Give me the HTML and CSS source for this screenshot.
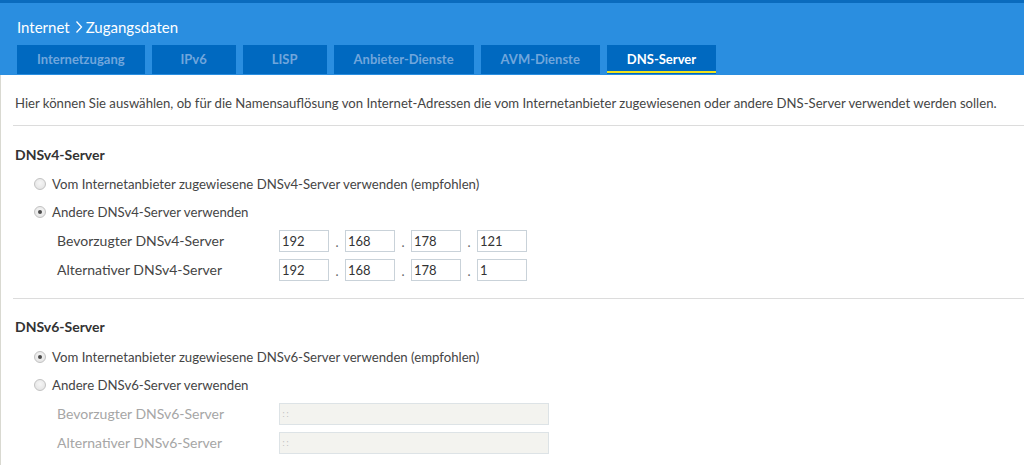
FILE: index.html
```html
<!DOCTYPE html>
<html lang="de">
<head>
<meta charset="utf-8">
<title>Zugangsdaten</title>
<link rel="stylesheet" href="styles.css">
</head>
<body>
<div class="topbar"></div>
<header class="header">
  <h1 class="title">Internet<svg class="chev" width="8" height="14" viewBox="0 0 8 14"><polyline points="1.5,1.5 6.5,7 1.5,12.5" fill="none" stroke="#fff" stroke-width="1.3"/></svg>Zugangsdaten</h1>
  <nav class="tabs">
    <a class="tab">Internetzugang</a>
    <a class="tab">IPv6</a>
    <a class="tab">LISP</a>
    <a class="tab">Anbieter-Dienste</a>
    <a class="tab">AVM-Dienste</a>
    <a class="tab active">DNS-Server</a>
  </nav>
</header>
<main class="content">
  <p class="intro">Hier können Sie auswählen, ob für die Namensauflösung von Internet-Adressen die vom Internetanbieter zugewiesenen oder andere DNS-Server verwendet werden sollen.</p>
  <hr class="sep">
  <section class="block">
    <h2 class="sec-title">DNSv4-Server</h2>
    <div class="radios">
      <label class="radio-row"><span class="radio"></span>Vom Internetanbieter zugewiesene DNSv4-Server verwenden (empfohlen)</label>
      <label class="radio-row"><span class="radio checked"></span>Andere DNSv4-Server verwenden</label>
    </div>
    <div class="field-row">
      <span class="field-label">Bevorzugter DNSv4-Server</span>
      <div class="ip">
        <input class="octet" value="192"><span class="dot">.</span>
        <input class="octet" value="168"><span class="dot">.</span>
        <input class="octet" value="178"><span class="dot">.</span>
        <input class="octet" value="121">
      </div>
    </div>
    <div class="field-row">
      <span class="field-label">Alternativer DNSv4-Server</span>
      <div class="ip">
        <input class="octet" value="192"><span class="dot">.</span>
        <input class="octet" value="168"><span class="dot">.</span>
        <input class="octet" value="178"><span class="dot">.</span>
        <input class="octet" value="1">
      </div>
    </div>
  </section>
  <hr class="sep sep-lower">
  <section class="block">
    <h2 class="sec-title sec-title-lower">DNSv6-Server</h2>
    <div class="radios radios-lower">
      <label class="radio-row"><span class="radio checked"></span>Vom Internetanbieter zugewiesene DNSv6-Server verwenden (empfohlen)</label>
      <label class="radio-row"><span class="radio"></span>Andere DNSv6-Server verwenden</label>
    </div>
    <div class="field-row disabled">
      <span class="field-label">Bevorzugter DNSv6-Server</span>
      <input class="v6" value="::" disabled>
    </div>
    <div class="field-row disabled">
      <span class="field-label">Alternativer DNSv6-Server</span>
      <input class="v6" value="::" disabled>
    </div>
  </section>
</main>
</body>
</html>
```

FILE: styles.css
```css
html, body {
  margin: 0;
  padding: 0;
  background: #fff;
}

body {
  font-family: Lato, "Open Sans", sans-serif;
  color: #454545;
  overflow: hidden;
}

.topbar {
  height: 3px;
  background: #0a6bbd;
}

.header {
  background: #2a8ee0;
  padding: 14px 0 1px 17px;
}

.title {
  margin: 0;
  display: flex;
  align-items: center;
  font-size: 15px;
  font-weight: 400;
  line-height: 20px;
  color: #fff;
}

.chev {
  margin: 0 3px 0 5px;
}

.tabs {
  display: flex;
  gap: 7px;
  margin-top: 8px;
}

.tab {
  position: relative;
  height: 29px;
  line-height: 29px;
  padding: 0 20px;
  min-width: 44px;
  text-align: center;
  background: #0069c0;
  color: #70a6dc;
  font-size: 13px;
  font-weight: 700;
  white-space: nowrap;
}

.tab.active {
  color: #fff;
}

.tab.active::after {
  content: "";
  position: absolute;
  left: 0;
  right: 0;
  bottom: 1px;
  height: 2px;
  background: #f2e21c;
}

.content {
  border-left: 1px solid #d9d9d1;
  padding: 18px 0 20px 14px;
}

.intro {
  margin: 0;
  font-size: 13.13px;
  line-height: 20px;
  white-space: nowrap;
}

.sep {
  border: 0;
  border-top: 1px solid #dcdcdc;
  margin: 12px 0 0 -2px;
  height: 0;
}

.sep-lower {
  margin-top: 14px;
}

.sec-title {
  margin: 19px 0 0;
  font-size: 14px;
  font-weight: 700;
  line-height: 20px;
  color: #333;
}

.sec-title-lower {
  margin-top: 18px;
}

.radios {
  margin-top: 5px;
}

.radios-lower {
  margin-top: 6px;
}

.radio-row {
  display: flex;
  align-items: center;
  height: 28px;
  padding-left: 19px;
  font-size: 13.2px;
}

.radio {
  box-sizing: border-box;
  width: 12px;
  height: 12px;
  border-radius: 50%;
  border: 1px solid #c2c2c2;
  background: radial-gradient(circle at 50% 40%, #f6f6f6 0%, #e0e0e0 100%);
  margin-right: 6px;
  position: relative;
  flex: none;
}

.radio.checked::after {
  content: "";
  position: absolute;
  left: 3px;
  top: 3px;
  width: 4px;
  height: 4px;
  border-radius: 50%;
  background: #4a4a4a;
}

.field-row {
  display: flex;
  align-items: center;
  height: 29px;
  padding-left: 42px;
  font-size: 14px;
}

.field-label {
  width: 222px;
  flex: none;
}

.ip {
  display: flex;
  align-items: center;
}

.octet {
  box-sizing: border-box;
  width: 50px;
  height: 22px;
  margin: 0;
  border: 1px solid #c9d2d9;
  border-radius: 0;
  padding: 0 2px;
  font-family: Lato, "Open Sans", sans-serif;
  font-size: 13px;
  color: #333;
  background: #fff;
  outline: none;
}

.dot {
  width: 16px;
  text-align: center;
  font-size: 13px;
  line-height: 14px;
  color: #666;
  padding-top: 2px;
}

.disabled .field-label {
  color: #a6a6a6;
}

.v6 {
  box-sizing: border-box;
  width: 270px;
  height: 22px;
  margin: 0;
  border: 1px solid #dde3e6;
  border-radius: 0;
  padding: 0 2px;
  font-family: "DejaVu Sans", sans-serif;
  font-size: 9px;
  letter-spacing: 1px;
  color: #c2c2c2;
  background: #f3f3ef;
}
```
